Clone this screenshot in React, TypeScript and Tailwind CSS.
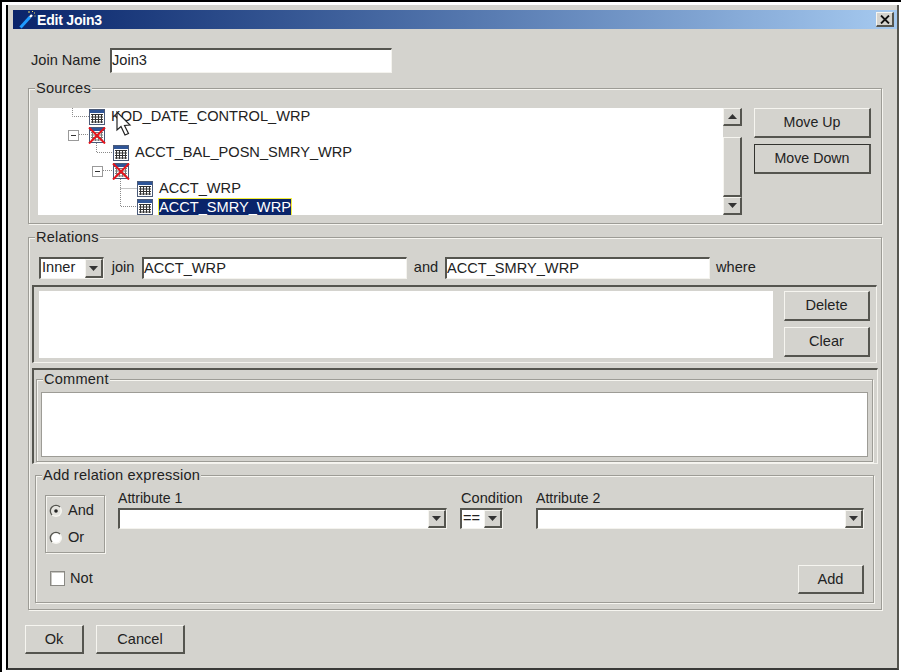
import * as React from "react"

const bevel = "border-t border-l border-t-[#f6f5f0] border-l-[#f6f5f0] border-r-2 border-b-2 border-r-[#55554f] border-b-[#55554f]"
const sunken = "border-t-2 border-l-2 border-t-[#55554f] border-l-[#55554f] border-r border-b border-r-[#f4f3ee] border-b-[#f4f3ee]"
const etched = "border border-[#9d9c96] shadow-[1px_1px_0_#f6f5f0,inset_1px_1px_0_#f6f5f0]"

function Button({ label, className = "" }: { label: string; className?: string }) {
  return (
    <button className={`flex items-center justify-center bg-[#d4d3ce] pt-px text-[#222] ${bevel} ${className}`}>
      {label}
    </button>
  )
}

function Arrow({ up = false }: { up?: boolean }) {
  return (
    <svg width="9" height="5" viewBox="0 0 9 5">
      <path d={up ? "M0 5 L4.5 0 L9 5 Z" : "M0 0 L9 0 L4.5 5 Z"} fill="#333" />
    </svg>
  )
}

function Combo({ value, className = "" }: { value?: string; className?: string }) {
  return (
    <div className={`flex h-[21px] items-stretch bg-white ${sunken} ${className}`}>
      <span className="flex-1 overflow-hidden pl-[1px] leading-[17px] text-[#222]">{value}</span>
      <span className={`flex w-[18px] items-center justify-center bg-[#d4d3ce] ${bevel}`}>
        <Arrow />
      </span>
    </div>
  )
}

function TextInput({ value, className = "" }: { value: string; className?: string }) {
  return (
    <div className={`flex items-center overflow-hidden bg-white text-[#222] ${sunken} ${className}`}>
      {value}
    </div>
  )
}

function Group({ title, className = "", children }: { title: string; className?: string; children: React.ReactNode }) {
  return (
    <div className={`relative ${etched} ${className}`}>
      <span className="absolute -top-[8px] left-[6px] bg-[#d4d3ce] px-px leading-[15px] tracking-[0.2px] text-[#222]">{title}</span>
      {children}
    </div>
  )
}

function TableIcon({ crossed = false }: { crossed?: boolean }) {
  return (
    <span className="relative block h-[16px] w-[16px] shrink-0">
      <svg width="16" height="16" viewBox="0 0 16 16" className="block">
        <rect x="0.5" y="0.5" width="15" height="15" fill="#fff" stroke="#4a5a78" />
        <rect x="1" y="1" width="14" height="3" fill="#2f5597" />
        <path
          d="M2 5.5h12M2 8h12M2 10.5h12M2 13h12M3.5 5v9M6.5 5v9M9.5 5v9M12.5 5v9"
          stroke={crossed ? "#777" : "#333"}
          strokeWidth="1"
          fill="none"
        />
      </svg>
      {crossed && (
        <svg width="18" height="17" viewBox="0 0 18 17" className="absolute -left-px top-0">
          <path d="M1 0.5 L17 16.5 M17 0.5 L1 16.5" stroke="#e8141c" strokeWidth="2" />
        </svg>
      )}
    </span>
  )
}

const rows = [
  { indent: "pl-[51px]", label: "KOD_DATE_CONTROL_WRP" },
  { indent: "pl-[51px]", crossed: true },
  { indent: "pl-[75px]", label: "ACCT_BAL_POSN_SMRY_WRP" },
  { indent: "pl-[75px]", crossed: true },
  { indent: "pl-[99px]", label: "ACCT_WRP" },
  { indent: "pl-[99px]", label: "ACCT_SMRY_WRP", selected: true },
]

function Tree() {
  return (
    <div className="relative h-[107px] flex-1 overflow-hidden bg-white">
      {rows.map((row, i) => (
        <div key={i} className={`flex h-[18px] items-center gap-[6px] ${row.indent}`}>
          <TableIcon crossed={row.crossed} />
          {row.label && (
            <span
              className={
                row.selected
                  ? "-ml-[1px] border border-[#f2ee3a] bg-[#0a246a] leading-[16px] text-white"
                  : "text-[#222]"
              }
            >
              {row.label}
            </span>
          )}
        </div>
      ))}
      {/* tree connectors and expand boxes */}
      <svg width="140" height="107" viewBox="0 0 140 107" className="absolute left-0 top-0">
        <g stroke="#8a8a8a" strokeDasharray="1 1" fill="none">
          <path d="M34.5 0V8.5H51" />
          <path d="M41 26.5H50" />
          <path d="M58.5 35V44.5H75" />
          <path d="M65 62.5H74" />
          <path d="M82.5 71V98.5H99M82.5 80.5H99" />
        </g>
        <g fill="#fff" stroke="#9a9a9a">
          <rect x="30.5" y="22.5" width="10" height="10" />
          <rect x="54.5" y="58.5" width="10" height="10" />
        </g>
        <path d="M33 27.5H38M57 63.5H62" stroke="#333" />
      </svg>
      {/* mouse pointer */}
      <svg width="17" height="26" viewBox="0 0 17 26" className="absolute left-[78px] top-[3px]">
        <path d="M1 1 V19 L5 15.5 L9 24 L12.5 22.5 L8.5 14.5 L14 14 Z" fill="#fff" stroke="#222" strokeWidth="1.2" />
      </svg>
    </div>
  )
}

function Scrollbar() {
  return (
    <div className="flex h-[107px] w-[19px] flex-col">
      <span className={`flex h-[18px] items-center justify-center ${bevel}`}><Arrow up /></span>
      <span className="h-[11px]" />
      <span className={`h-[60px] ${bevel}`} />
      <span className={`flex h-[18px] items-center justify-center ${bevel}`}><Arrow /></span>
    </div>
  )
}

function Radio({ label, checked = false }: { label: string; checked?: boolean }) {
  return (
    <div className="flex h-[27px] items-center gap-[5px] pl-[3px] pt-px">
      <svg width="14" height="14" viewBox="0 0 14 14">
        <circle cx="7" cy="7" r="6" fill="#f6f5f0" />
        <circle cx="7" cy="7" r="4.5" fill={checked ? "#e4e3de" : "#fff"} />
        <path d="M11 3 A5.5 5.5 0 0 0 3 11" stroke="#55554f" strokeWidth="1.4" fill="none" />
        {checked && <circle cx="7" cy="7" r="1.8" fill="#222" />}
      </svg>
      <span className="text-[#222]">{label}</span>
    </div>
  )
}

export default function App() {
  return (
    <div
      className="h-[672px] w-[901px] overflow-hidden border-l-2 border-t-2 border-black bg-white pl-[4px] pr-[2px] pt-[3px] text-[14.6px]"
      style={{ fontFamily: '"Liberation Sans", Arial, sans-serif' }}
    >
      <div className="flex h-[665px] flex-col border-b-2 border-l-2 border-r-2 border-b-[#3a3a38] border-l-black border-r-[#55554f] bg-[#d4d3ce] pt-[5px]">
        {/* title bar */}
        <div className="ml-[5px] flex h-[19px] items-center bg-gradient-to-r from-[#0a246a] to-[#a6caf0] pr-[3px]">
          <svg width="17" height="18" viewBox="0 0 17 18" className="ml-[6px] shrink-0">
            <path d="M1.5 16.5 L11 6" stroke="#1f9bff" strokeWidth="3" />
            <path d="M11 6 L13 4" stroke="#fff" strokeWidth="2.4" />
            <path d="M9 1h2M13 0.5h1M15 2h1M15.5 5h1" stroke="#f4e36a" strokeWidth="1" />
          </svg>
          <span className="ml-[1px] pt-px text-[14px] font-bold tracking-[-0.2px] text-white">Edit Join3</span>
          <span className={`ml-auto flex h-[15px] w-[18px] items-center justify-center bg-[#d4d3ce] ${bevel}`}>
            <svg width="10" height="9" viewBox="0 0 10 9">
              <path d="M1 0.5 L9 8.5 M9 0.5 L1 8.5" stroke="#111" strokeWidth="1.8" />
            </svg>
          </span>
        </div>

        <div className="flex flex-1 flex-col pl-[20px] pr-[15px]">
          {/* join name */}
          <div className="mt-[19px] flex h-[25px] items-center pl-[3px]">
            <span className="w-[79px] text-[#222]">Join Name</span>
            <TextInput value="Join3" className="h-[25px] w-[282px]" />
          </div>

          {/* sources */}
          <Group title="Sources" className="mt-[15px] flex pb-[8px] pl-[9px] pr-[10px] pt-[19px]">
            <Tree />
            <Scrollbar />
            <div className="ml-[12px] flex w-[117px] flex-col gap-[6px] text-[14.2px]">
              <Button label="Move Up" className="h-[30px]" />
              <Button label="Move Down" className="h-[30px] !border-t-[#33332f] !border-l-[#33332f]" />
            </div>
          </Group>

          {/* relations */}
          <Group title="Relations" className="mt-[13px] pb-[6px] pl-[3px] pr-[4px] pt-[19px]">
            <div className="ml-[7px] flex h-[22px] items-stretch">
              <Combo value="Inner" className="h-[22px] w-[65px]" />
              <span className="flex w-[38px] items-center justify-center text-[#222]">join</span>
              <TextInput value="ACCT_WRP" className="w-[265px]" />
              <span className="flex w-[38px] items-center justify-center text-[#222]">and</span>
              <TextInput value="ACCT_SMRY_WRP" className="w-[265px]" />
              <span className="ml-[6px] flex items-center text-[#222]">where</span>
            </div>

            <div className={`mt-[6px] flex h-[78px] pb-[4px] pl-[5px] pr-[6px] pt-[4px] ${sunken}`}>
              <div className="h-[67px] flex-1 bg-white" />
              <div className="ml-[11px] flex w-[86px] flex-col gap-[6px]">
                <Button label="Delete" className="h-[30px]" />
                <Button label="Clear" className="h-[30px]" />
              </div>
            </div>

            <div className={`-mr-px mt-[5px] h-[96px] pl-[2px] pr-[4px] pt-[9px] ${sunken}`}>
              <Group title="Comment" className="h-[83px] px-[4px] pb-[4px] pt-[12px]">
                <div className="h-[65px] border border-[#9d9c96] bg-white" />
              </Group>
            </div>

            <Group title="Add relation expression" className="ml-[3px] mr-[3px] mt-[11px] flex h-[128px] pb-[8px] pl-[9px] pr-[9px] pt-[19px]">
              <div className="w-[60px] shrink-0">
                <div className={`h-[58px] py-[1px] ${etched}`}>
                  <Radio label="And" checked />
                  <Radio label="Or" />
                </div>
                <div className="ml-[5px] mt-[18px] flex h-[15px] items-center gap-[5px]">
                  <span className="h-[15px] w-[15px] border border-[#8a8984] bg-white shadow-[inset_1px_1px_0_#c8c7c2]" />
                  <span className="text-[#222]">Not</span>
                </div>
              </div>
              <div className="ml-[13px] flex flex-1 flex-col justify-between">
                <div className="flex">
                  <div className="w-[329px]">
                    <div className="h-[13px] text-[14.1px] leading-[7px] text-[#222]">Attribute 1</div>
                    <Combo />
                  </div>
                  <div className="ml-[13px] w-[63px]">
                    <div className="h-[13px] pl-px leading-[7px] text-[#222]">Condition</div>
                    <Combo value="==" className="w-[43px]" />
                  </div>
                  <div className="ml-[13px] flex-1">
                    <div className="h-[13px] text-[14.1px] leading-[7px] text-[#222]">Attribute 2</div>
                    <Combo />
                  </div>
                </div>
                <Button label="Add" className="h-[29px] w-[66px] self-end" />
              </div>
            </Group>
          </Group>

          {/* footer */}
          <div className="-ml-[3px] mt-[15px] flex gap-[12px]">
            <Button label="Ok" className="h-[29px] w-[59px]" />
            <Button label="Cancel" className="h-[29px] w-[89px]" />
          </div>
        </div>
      </div>
    </div>
  )
}
